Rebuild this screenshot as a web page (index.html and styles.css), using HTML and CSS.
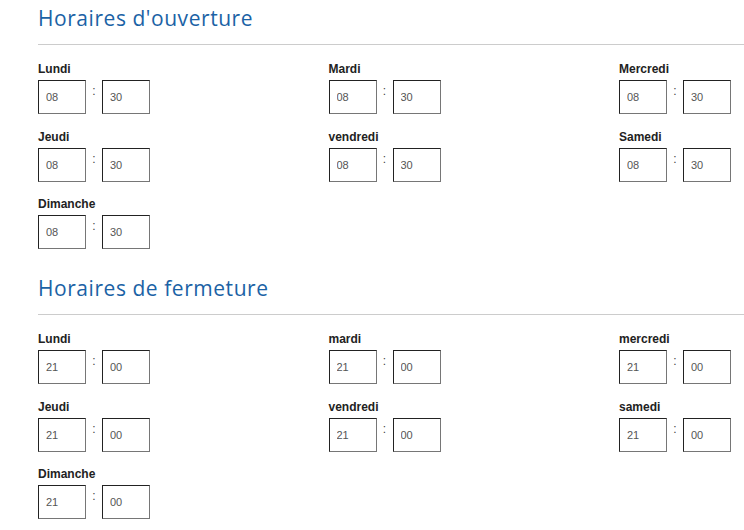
FILE: index.html
```html
<!doctype html>
<html lang="fr">
    <head>
        <meta charset="UTF-8" />
        <meta name="viewport" content="width=device-width, initial-scale=1.0" />
        <title>Horaires</title>
        <link rel="stylesheet" href="styles.css">
    </head>
    <body>
        <section class="hours">
            <h2>Horaires d'ouverture</h2>
            <div class="days">
                <div class="day"><label>Lundi</label><div class="time"><input type="text" value="08" /><span class="sep">:</span><input type="text" value="30" /></div></div>
                <div class="day"><label>Mardi</label><div class="time"><input type="text" value="08" /><span class="sep">:</span><input type="text" value="30" /></div></div>
                <div class="day"><label>Mercredi</label><div class="time"><input type="text" value="08" /><span class="sep">:</span><input type="text" value="30" /></div></div>
                <div class="day"><label>Jeudi</label><div class="time"><input type="text" value="08" /><span class="sep">:</span><input type="text" value="30" /></div></div>
                <div class="day"><label>vendredi</label><div class="time"><input type="text" value="08" /><span class="sep">:</span><input type="text" value="30" /></div></div>
                <div class="day"><label>Samedi</label><div class="time"><input type="text" value="08" /><span class="sep">:</span><input type="text" value="30" /></div></div>
                <div class="day"><label>Dimanche</label><div class="time"><input type="text" value="08" /><span class="sep">:</span><input type="text" value="30" /></div></div>
            </div>
        </section>
        <section class="hours">
            <h2>Horaires de fermeture</h2>
            <div class="days">
                <div class="day"><label>Lundi</label><div class="time"><input type="text" value="21" /><span class="sep">:</span><input type="text" value="00" /></div></div>
                <div class="day"><label>mardi</label><div class="time"><input type="text" value="21" /><span class="sep">:</span><input type="text" value="00" /></div></div>
                <div class="day"><label>mercredi</label><div class="time"><input type="text" value="21" /><span class="sep">:</span><input type="text" value="00" /></div></div>
                <div class="day"><label>Jeudi</label><div class="time"><input type="text" value="21" /><span class="sep">:</span><input type="text" value="00" /></div></div>
                <div class="day"><label>vendredi</label><div class="time"><input type="text" value="21" /><span class="sep">:</span><input type="text" value="00" /></div></div>
                <div class="day"><label>samedi</label><div class="time"><input type="text" value="21" /><span class="sep">:</span><input type="text" value="00" /></div></div>
                <div class="day"><label>Dimanche</label><div class="time"><input type="text" value="21" /><span class="sep">:</span><input type="text" value="00" /></div></div>
            </div>
        </section>
    </body>
</html>
```

FILE: styles.css
```css
:root {
    --title-color: #1b62a5;
    --input-text: #555;
}
html, body {
    overflow: hidden;
}
body {
    margin: 0;
    padding: 0 0 0 38px;
    background: #fff;
    font-family: "Liberation Sans", Arial, sans-serif;
    color: #222;
}
.hours {
    width: 872px;
}
.hours + .hours {
    margin-top: 21px;
}
h2 {
    margin: 0;
    padding-top: 5px;
    font-family: "Open Sans", sans-serif;
    font-weight: 400;
    font-size: 21px;
    line-height: 26px;
    letter-spacing: 0.55px;
    color: var(--title-color);
    border-bottom: 1px solid #ccc;
    padding-bottom: 13px;
}
.days {
    display: grid;
    grid-template-columns: repeat(3, 290.5px);
    row-gap: 15.5px;
    padding-top: 17px;
}
.day label {
    display: block;
    font-size: 12px;
    font-weight: bold;
    line-height: 14px;
    margin-bottom: 4px;
}
.time {
    display: flex;
    align-items: flex-start;
}
.time input {
    box-sizing: border-box;
    width: 48px;
    height: 34px;
    margin: 0;
    padding: 0 7px;
    font-family: "Liberation Sans", Arial, sans-serif;
    font-size: 11px;
    color: var(--input-text);
    border: 1px solid #767676;
    border-top-color: #222;
    border-left-color: #222;
    border-radius: 0;
    outline: none;
}
.sep {
    width: 16px;
    text-align: center;
    font-size: 12px;
    line-height: 12px;
    padding-top: 5px;
    color: #444;
}
```
